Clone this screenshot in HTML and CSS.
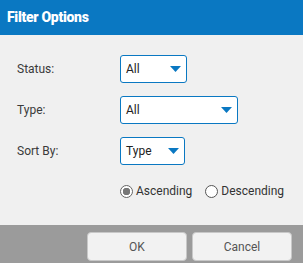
FILE: index.html
```html
<!DOCTYPE html>
<html lang="en">
<head>
    <meta charset="UTF-8">
    <title>Filter Options</title>
    <link rel="stylesheet" href="styles.css">
</head>
<body>
    <div class="dialog">
        <div class="dialog-header">Filter Options</div>

        <div class="dialog-body">
            <div class="field">
                <label>Status:</label>
                <div class="dropdown dropdown-status">
                    <span>All</span>
                    <svg class="caret" width="11" height="6" viewBox="0 0 11 6"><path d="M0 0 H11 L5.5 6 Z" fill="#0a78c2"/></svg>
                </div>
            </div>
            <div class="field">
                <label>Type:</label>
                <div class="dropdown dropdown-type">
                    <span>All</span>
                    <svg class="caret" width="11" height="6" viewBox="0 0 11 6"><path d="M0 0 H11 L5.5 6 Z" fill="#0a78c2"/></svg>
                </div>
            </div>
            <div class="field">
                <label>Sort By:</label>
                <div class="dropdown dropdown-sort">
                    <span>Type</span>
                    <svg class="caret" width="11" height="6" viewBox="0 0 11 6"><path d="M0 0 H11 L5.5 6 Z" fill="#0a78c2"/></svg>
                </div>
            </div>

            <!-- sort direction -->
            <div class="order">
                <span class="radio checked"></span><span class="radio-label">Ascending</span>
                <span class="radio"></span><span class="radio-label">Descending</span>
            </div>
        </div>

        <div class="dialog-footer">
            <button class="btn">OK</button>
            <button class="btn">Cancel</button>
        </div>
    </div>
</body>
</html>
```

FILE: styles.css
```css
body {
    margin: 0;
    font-family: Roboto, "Liberation Sans", sans-serif;
    background-color: #f0f0f0;
}

.dialog {
    width: 303px;
    height: 263px;
    display: flex;
    flex-direction: column;
    overflow: hidden;
}

.dialog-header {
    height: 35px;
    line-height: 34px;
    padding-left: 7px;
    background-color: #0a78c2;
    color: #fff;
    font-size: 14px;
    font-weight: 900;
    letter-spacing: -0.3px;
}

.dialog-body {
    flex: 1;
    padding: 20px 0 0 17px;
    background-color: #f0f0f0;
}

.field {
    display: flex;
    align-items: center;
    height: 28px;
    margin-bottom: 13px;
}

.field label {
    width: 103px;
    font-size: 12px;
    color: #3a3a3a;
}

.dropdown {
    box-sizing: border-box;
    height: 28px;
    display: flex;
    align-items: center;
    justify-content: space-between;
    padding: 0 5px 0 5px;
    background-color: #fff;
    border: 1px solid #0a78c2;
    border-radius: 3px;
    font-size: 12px;
    color: #222;
}

.dropdown-status { width: 67px; }
.dropdown-type { width: 118px; }
.dropdown-sort { width: 65px; }

.caret {
    display: block;
}

.order {
    display: flex;
    align-items: center;
    margin: 19px 0 0 103px;
    font-size: 12px;
    color: #333;
}

.radio {
    box-sizing: border-box;
    width: 13px;
    height: 13px;
    border: 1px solid #555;
    border-radius: 50%;
    background-color: #fff;
    margin-right: 3px;
}

.radio.checked {
    border-color: #666;
    background: radial-gradient(circle, #777 0 3.5px, #fff 4px);
}

.radio-label {
    margin-right: 13px;
}

.dialog-footer {
    height: 38px;
    box-sizing: border-box;
    padding: 7px 11px 0 0;
    display: flex;
    justify-content: flex-end;
    gap: 5px;
    background-color: #9b9b9b;
}

.btn {
    width: 100px;
    height: 29px;
    font-family: Roboto, "Liberation Sans", sans-serif;
    font-size: 12px;
    color: #555;
    background-color: #f2f2f2;
    border: 1px solid #c8c8c8;
    border-radius: 4px;
}
```
